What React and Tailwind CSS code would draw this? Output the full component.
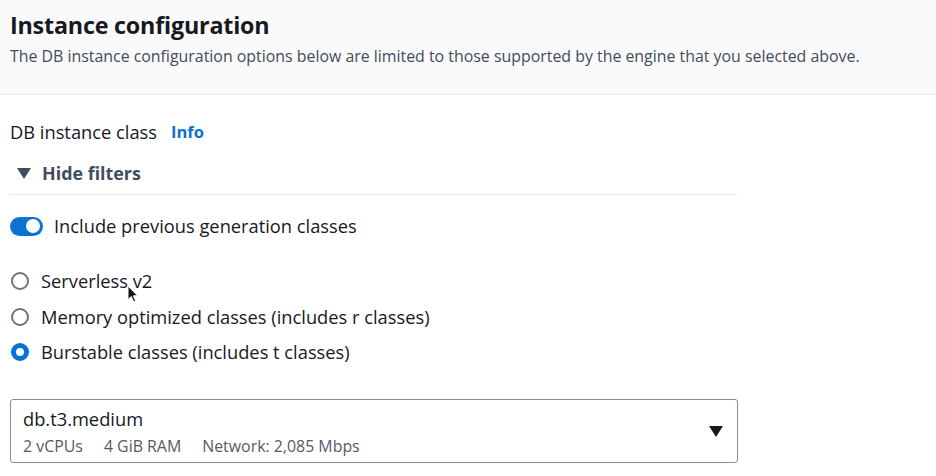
import React, { useState } from 'react'

const OPTIONS = [
  { id: 'serverless', label: 'Serverless v2' },
  { id: 'memory', label: 'Memory optimized classes (includes r classes)' },
  { id: 'burstable', label: 'Burstable classes (includes t classes)' },
]

function Radio({ checked }) {
  return checked ? (
    <span className="w-[18px] h-[18px] rounded-full border-[5px] border-[#0972d3] bg-white shrink-0" />
  ) : (
    <span className="w-[18px] h-[18px] rounded-full border-2 border-[#6b7480] bg-white shrink-0" />
  )
}

export default function App() {
  const [prev, setPrev] = useState(true)
  const [cls, setCls] = useState('burstable')

  return (
    <div className="w-[936px] h-[476px] bg-white text-[#16191f] font-['Open_Sans',sans-serif] overflow-hidden relative">
      {/* Header */}
      <div className="h-[95px] bg-[#fafafa] border-b border-[#e9ebed] px-[10px] pt-[8px]">
        <h1 className="text-[23.3px] leading-[34px] font-bold tracking-[-0.2px]">Instance configuration</h1>
        <p className="text-[15.9px] leading-[24px] text-[#414d5c] mt-[2px]">
          The DB instance configuration options below are limited to those supported by the engine that you selected above.
        </p>
      </div>

      <div className="px-[10px]">
        <div className="w-[728px]">
          <div className="flex items-center gap-[14px] mt-[24px] h-[26px]">
            <span className="text-[18.3px]">DB instance class</span>
            <span className="text-[16.5px] font-bold text-[#0972d3]">Info</span>
          </div>

          <button className="flex items-center gap-[11px] mt-[15px] h-[26px] pl-[7px] text-[#414d5c]">
            <svg width="14" height="11" viewBox="0 0 14 11">
              <path d="M0 0 H14 L7 11 Z" fill="#414d5c" />
            </svg>
            <span className="text-[17.9px] font-bold">Hide filters</span>
          </button>

          <div className="border-b border-[#e9ebed] mt-[8px]" />

          <div className="flex items-center gap-[11px] mt-[19px] h-[24px]" onClick={() => setPrev(!prev)}>
            <span className={`w-[33px] h-[19px] rounded-full flex items-center px-[3px] shrink-0 ${prev ? 'bg-[#0972d3] justify-end' : 'bg-[#7d8998] justify-start'}`}>
              <span className="w-[14px] h-[14px] rounded-full bg-white" />
            </span>
            <span className="text-[18.3px]">Include previous generation classes</span>
          </div>

          <div className="mt-[31px] flex flex-col gap-[11.5px]">
            {OPTIONS.map((o) => (
              <label key={o.id} className="flex items-center gap-[12px] pl-[1px] h-[24px] cursor-pointer" onClick={() => setCls(o.id)}>
                <Radio checked={cls === o.id} />
                <span className="text-[18.3px]">{o.label}</span>
              </label>
            ))}
          </div>

          <div className="mt-[35px] h-[64px] border border-[#8c8c94] rounded-[3px] flex items-center pl-[12px] pr-[14px]">
            <div className="flex-1">
              <div className="text-[18.3px] leading-[25px]">db.t3.medium</div>
              <div className="text-[15.9px] leading-[22px] mt-[4px] text-[#545b64] flex gap-[21px]">
                <span>2 vCPUs</span>
                <span>4 GiB RAM</span>
                <span>Network: 2,085 Mbps</span>
              </div>
            </div>
            <svg width="14" height="11" viewBox="0 0 14 11">
              <path d="M0 0 H14 L7 11 Z" fill="#16191f" />
            </svg>
          </div>
        </div>
      </div>

      {/* mouse pointer */}
      <svg className="absolute left-[127px] top-[285px]" width="12" height="18" viewBox="0 0 12 18">
        <path d="M1 1 V14.5 L4.3 11.5 L6.7 16.8 L8.7 15.9 L6.4 10.8 H10.6 Z" fill="#111" stroke="#fff" strokeWidth="1" />
      </svg>
    </div>
  )
}
